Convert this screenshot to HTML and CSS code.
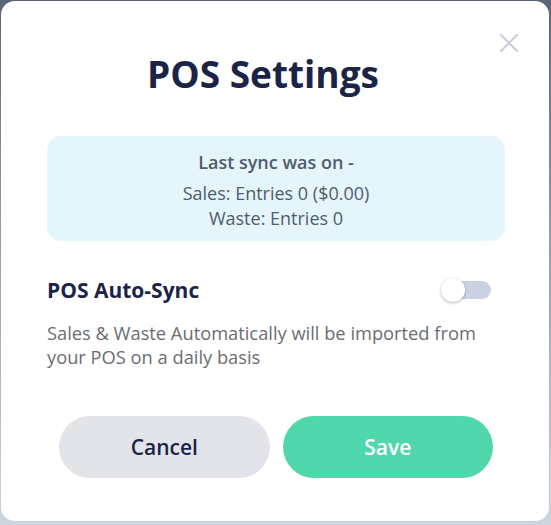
FILE: index.html
```html
<!DOCTYPE html>
<html lang="en">
<head>
<meta charset="UTF-8">
<meta name="viewport" content="width=device-width, initial-scale=1.0">
<title>POS Settings</title>
<link rel="stylesheet" href="styles.css">
</head>
<body>

<div class="modal">
  <!-- Close button -->
  <button class="close-btn" aria-label="Close">
    <svg width="20" height="20" viewBox="0 0 20 20">
      <path d="M2 2 L18 18 M18 2 L2 18" stroke="#c9cdd5" stroke-width="2" stroke-linecap="round"/>
    </svg>
  </button>

  <h1 class="modal-title">POS Settings</h1>

  <!-- Last sync info -->
  <div class="sync-box">
    <div class="sync-heading">Last sync was on -</div>
    <div class="sync-line">Sales: Entries 0 ($0.00)</div>
    <div class="sync-line">Waste: Entries 0</div>
  </div>

  <!-- Auto sync toggle -->
  <div class="setting-row">
    <span class="setting-label">POS Auto-Sync</span>
    <label class="toggle">
      <span class="toggle-track"></span>
      <span class="toggle-knob"></span>
    </label>
  </div>
  <p class="setting-desc">Sales &amp; Waste Automatically will be imported from your POS on a daily basis</p>

  <div class="button-row">
    <button class="btn btn-cancel">Cancel</button>
    <button class="btn btn-save">Save</button>
  </div>
</div>

</body>
</html>
```

FILE: styles.css
```css
/* POS settings modal */
html, body {
height: 100%;
}

body {
margin: 0;
padding: 1px 2px 4px 1px;
box-sizing: border-box;
font-family: "Open Sans", Arial, sans-serif;
background: linear-gradient(180deg, #5b6478 0%, #8e97a8 40%, #cfd5de 100%);
}

.modal {
position: relative;
height: 100%;
box-sizing: border-box;
background-color: #fff;
border-radius: 14px;
padding: 43px 44px 0 46px;
}

.close-btn {
position: absolute;
top: 32px;
right: 30px;
padding: 0;
border: none;
background: none;
cursor: pointer;
}

.modal-title {
margin: 0 0 32px;
padding-right: 26px;
text-align: center;
font-size: 37px;
font-weight: 700;
color: #1b2447;
line-height: 60px;
}

.sync-box {
background-color: #e4f5fc;
border-radius: 14px;
padding: 12px 10px 10px;
text-align: center;
color: #505c6c;
}

.sync-heading {
font-size: 18px;
font-weight: 600;
line-height: 28px;
margin-bottom: 5px;
}

.sync-line {
font-size: 18px;
line-height: 25px;
}

.setting-row {
display: flex;
align-items: center;
justify-content: space-between;
margin-top: 35px;
padding-right: 14px;
}

.setting-label {
font-size: 21px;
font-weight: 700;
color: #1b2447;
}

.toggle {
position: relative;
display: block;
width: 50px;
height: 24px;
}

.toggle-track {
position: absolute;
top: 3px;
left: 8px;
right: 0;
height: 18px;
border-radius: 9px;
background-color: #c9d1e3;
}

.toggle-knob {
position: absolute;
top: 0;
left: 0;
width: 24px;
height: 24px;
border-radius: 50%;
background-color: #fff;
box-shadow: 0 1px 3px rgba(0, 0, 0, 0.3);
}

.setting-desc {
margin: 17px 0 0;
font-size: 18.3px;
line-height: 24px;
color: #6a6d73;
}

.button-row {
display: flex;
gap: 13px;
margin-top: 47px;
padding: 0 12px;
}

.btn {
flex: 1;
height: 62px;
border: none;
border-radius: 31px;
font-family: "Open Sans", Arial, sans-serif;
font-size: 21px;
font-weight: 600;
cursor: pointer;
}

.btn-cancel {
background-color: #e2e4ea;
color: #1b2447;
}

.btn-save {
background-color: #50d8ac;
color: #fff;
}
```
